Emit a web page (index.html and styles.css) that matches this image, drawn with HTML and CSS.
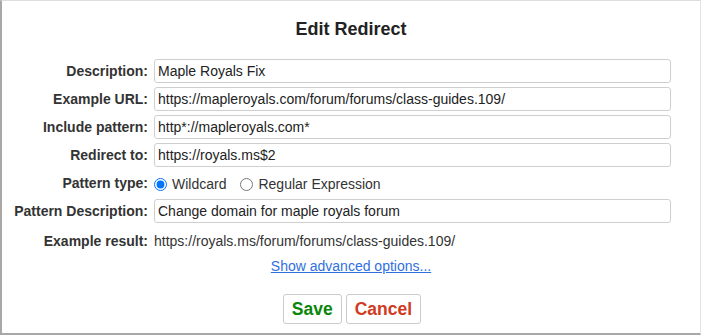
FILE: index.html
```html
<!DOCTYPE html>
<html lang="en">
<head>
  <meta charset="UTF-8">
  <title>Edit Redirect</title>
  <link rel="stylesheet" href="styles.css">
</head>
<body>

<div class="dialog">
  <h2 class="title">Edit Redirect</h2>

  <div class="form">
    <label class="lbl" for="desc">Description:</label>
    <input id="desc" class="field" type="text" value="Maple Royals Fix">

    <label class="lbl" for="example_url">Example URL:</label>
    <input id="example_url" class="field" type="text" value="https://mapleroyals.com/forum/forums/class-guides.109/">

    <label class="lbl" for="include">Include pattern:</label>
    <input id="include" class="field" type="text" value="http*://mapleroyals.com*">

    <label class="lbl" for="redirect">Redirect to:</label>
    <input id="redirect" class="field" type="text" value="https://royals.ms$2">

    <span class="lbl">Pattern type:</span>
    <div class="radios">
      <label class="opt"><input type="radio" name="tipo" checked>Wildcard</label>
      <label class="opt"><input type="radio" name="tipo">Regular Expression</label>
    </div>

    <label class="lbl" for="pattern_desc">Pattern Description:</label>
    <input id="pattern_desc" class="field" type="text" value="Change domain for maple royals forum">

    <span class="lbl result-row">Example result:</span>
    <span class="result result-row">https://royals.ms/forum/forums/class-guides.109/</span>
  </div>

  <div class="advanced">
    <a href="#">Show advanced options...</a>
  </div>

  <div class="buttons">
    <button class="btn save">Save</button>
    <button class="btn cancel">Cancel</button>
  </div>
</div>

</body>
</html>
```

FILE: styles.css
```css
* {
  box-sizing: border-box;
}

body {
  margin: 0;
  background: white;
  font-family: "Liberation Sans", Arial, sans-serif;
  color: #333;
}

.dialog {
  width: 701px;
  height: 335px;
  background: white;
  border-top: 1px solid #ddd;
  border-right: 1px solid #e4e4e4;
  border-left: 2px solid #a8a8a8;
  border-bottom: 2px solid #a8a8a8;
  padding-top: 17px;
}

.title {
  margin: 0;
  font-size: 18px;
  line-height: 22px;
  text-align: center;
  color: #222;
}

.form {
  margin-top: 19px;
  display: grid;
  grid-template-columns: 146px 517px;
  column-gap: 6px;
  row-gap: 4px;
  font-size: 14px;
}

.lbl {
  text-align: right;
  font-weight: bold;
  line-height: 24px;
  white-space: nowrap;
}

.field {
  height: 24px;
  margin: 0;
  padding: 0 3px;
  border: 1px solid #cfcfcf;
  border-radius: 3px;
  font-family: "Liberation Sans", Arial, sans-serif;
  font-size: 14px;
  color: #222;
  outline: none;
}

.radios {
  display: flex;
  align-items: center;
  height: 23px;
  padding-top: 3px;
}

.opt {
  display: flex;
  align-items: center;
  margin-right: 14px;
  white-space: nowrap;
}

.opt input {
  width: 13px;
  height: 13px;
  margin: 0 5px 0 0;
}

.result-row {
  margin-top: 3px;
  line-height: 23px;
}

.result {
  color: #333;
}

.advanced {
  margin-top: 2px;
  text-align: center;
  font-size: 14px;
  line-height: 23px;
}

.advanced a {
  color: #2f6fe0;
}

.buttons {
  margin-top: 16px;
  display: flex;
  justify-content: center;
  gap: 4px;
  padding-left: 2px;
}

.btn {
  height: 30px;
  padding: 0 8px;
  background: white;
  border: 1px solid #ccc;
  border-radius: 3px;
  font-family: "Liberation Sans", Arial, sans-serif;
  font-size: 17.5px;
  font-weight: bold;
  cursor: pointer;
}

.save {
  color: #0a860a;
}

.cancel {
  color: #d03a22;
}
```
